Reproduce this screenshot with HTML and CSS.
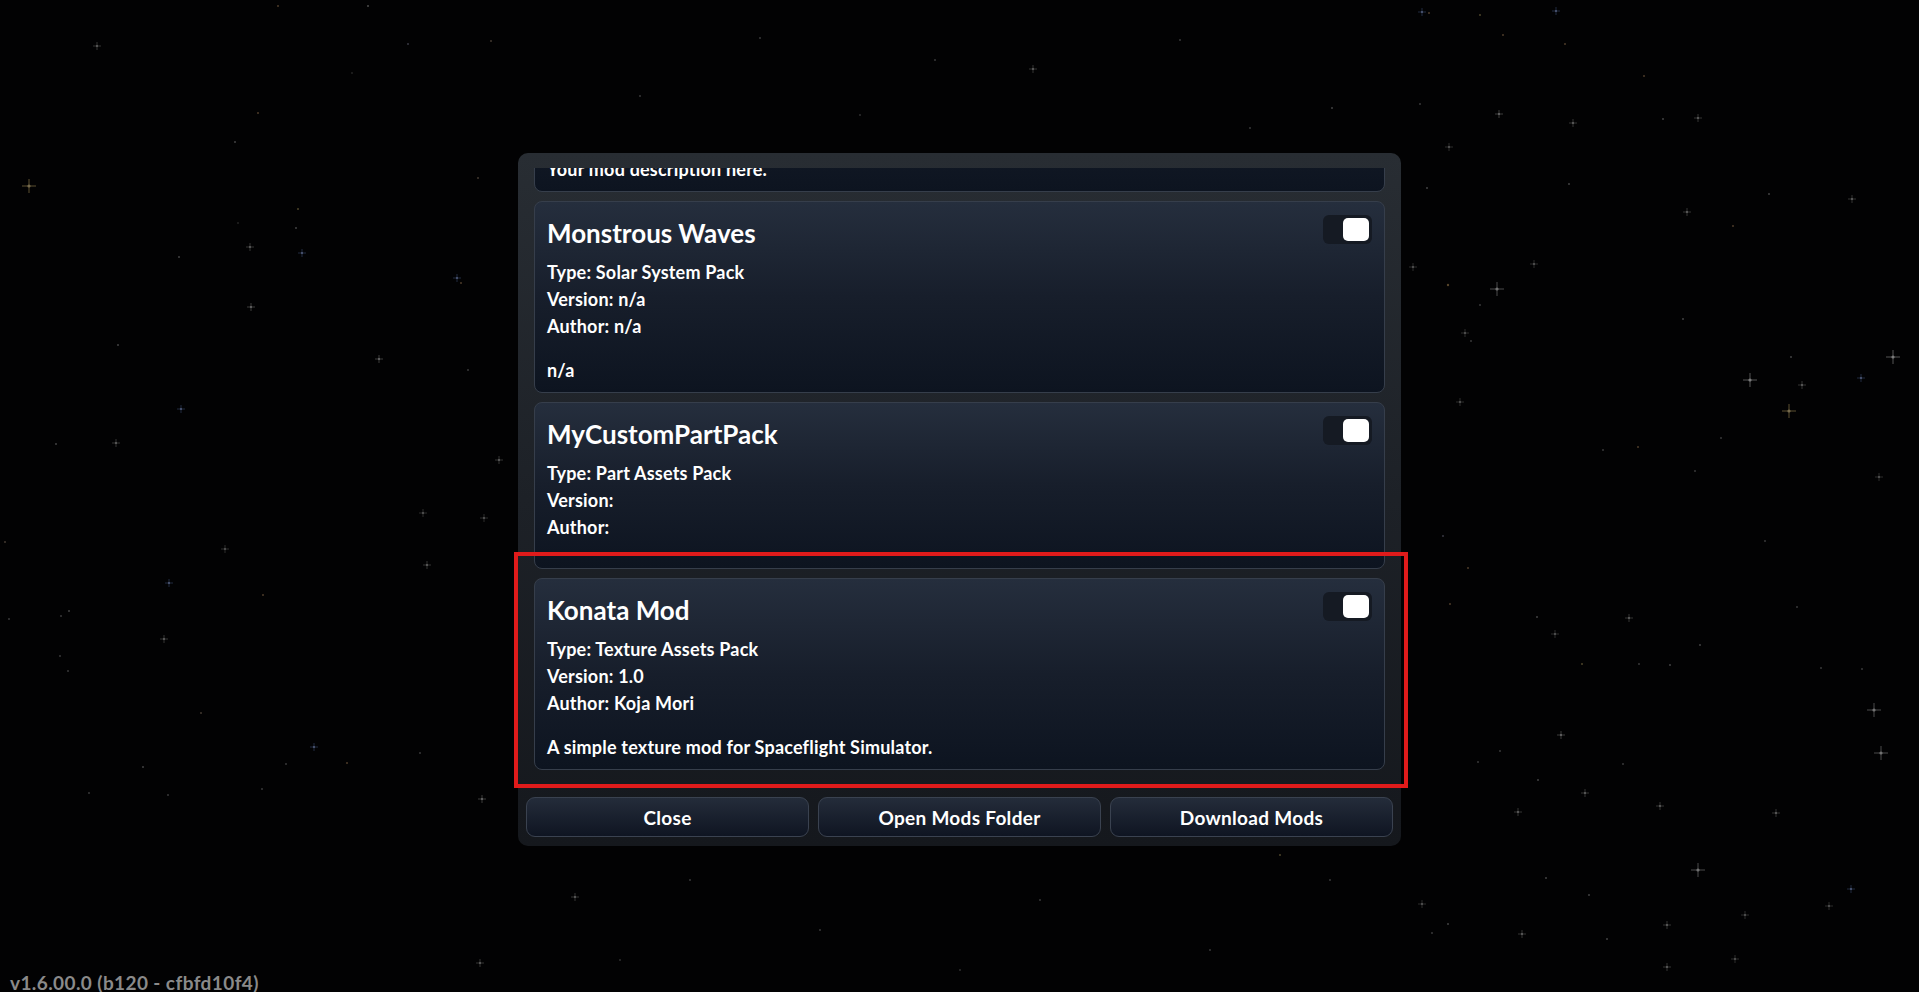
FILE: index.html
```html
<!DOCTYPE html>
<html lang="en">
<head>
    <meta charset="UTF-8">
    <meta name="viewport" content="width=device-width, initial-scale=1.0">
    <title>Mods</title>
    <link rel="stylesheet" href="styles.css">
</head>
<body>

    <!-- Star field -->
    <svg class="stars" width="1919" height="992" viewBox="0 0 1919 992">
        <defs>
            <g id="spark"><path d="M-4 0H4M0 -4V4" stroke-width="0.8"/><circle r="1.1" stroke="none"/></g>
            <g id="spark-big"><path d="M-7 0H7M0 -7V7" stroke-width="1"/><circle r="1.6" stroke="none"/></g>
        </defs>
        <g class="sparks">
            <use href="#spark-big" x="29" y="186" stroke="#a8925a" fill="#d8c28a"/>
            <use href="#spark" x="97" y="46" stroke="#777" fill="#aaa"/>
            <use href="#spark" x="250" y="247" stroke="#777" fill="#aaa"/>
            <use href="#spark" x="302" y="253" stroke="#4d5f8f" fill="#8ea2d8"/>
            <use href="#spark" x="457" y="278" stroke="#4d5f8f" fill="#8ea2d8"/>
            <use href="#spark" x="251" y="307" stroke="#888" fill="#bbb"/>
            <use href="#spark" x="379" y="359" stroke="#888" fill="#bbb"/>
            <use href="#spark" x="116" y="443" stroke="#777" fill="#aaa"/>
            <use href="#spark" x="499" y="460" stroke="#777" fill="#aaa"/>
            <use href="#spark" x="427" y="565" stroke="#777" fill="#aaa"/>
            <use href="#spark" x="164" y="639" stroke="#777" fill="#aaa"/>
            <use href="#spark" x="482" y="799" stroke="#888" fill="#bbb"/>
            <use href="#spark" x="225" y="549" stroke="#666" fill="#999"/>
            <use href="#spark" x="484" y="518" stroke="#666" fill="#999"/>
            <use href="#spark" x="423" y="513" stroke="#666" fill="#999"/>
            <use href="#spark" x="181" y="409" stroke="#4d5f8f" fill="#8ea2d8"/>
            <use href="#spark" x="169" y="583" stroke="#4d5f8f" fill="#8ea2d8"/>
            <use href="#spark" x="314" y="747" stroke="#4d5f8f" fill="#8ea2d8"/>
            <use href="#spark" x="1033" y="69" stroke="#777" fill="#aaa"/>
            <use href="#spark" x="575" y="897" stroke="#777" fill="#aaa"/>
            <use href="#spark" x="480" y="963" stroke="#777" fill="#aaa"/>
            <use href="#spark" x="1422" y="12" stroke="#4d5f8f" fill="#8ea2d8"/>
            <use href="#spark" x="1556" y="11" stroke="#4d5f8f" fill="#8ea2d8"/>
            <use href="#spark" x="1499" y="114" stroke="#888" fill="#bbb"/>
            <use href="#spark" x="1698" y="118" stroke="#777" fill="#aaa"/>
            <use href="#spark" x="1852" y="199" stroke="#777" fill="#aaa"/>
            <use href="#spark" x="1687" y="212" stroke="#777" fill="#aaa"/>
            <use href="#spark-big" x="1497" y="289" stroke="#888" fill="#ccc"/>
            <use href="#spark-big" x="1893" y="357" stroke="#999" fill="#ddd"/>
            <use href="#spark-big" x="1750" y="380" stroke="#999" fill="#ddd"/>
            <use href="#spark-big" x="1789" y="411" stroke="#a8925a" fill="#d8c28a"/>
            <use href="#spark" x="1802" y="385" stroke="#777" fill="#aaa"/>
            <use href="#spark" x="1861" y="378" stroke="#4d5f8f" fill="#8ea2d8"/>
            <use href="#spark-big" x="1874" y="710" stroke="#888" fill="#ccc"/>
            <use href="#spark-big" x="1881" y="753" stroke="#888" fill="#ccc"/>
            <use href="#spark-big" x="1698" y="870" stroke="#888" fill="#ccc"/>
            <use href="#spark" x="1561" y="735" stroke="#888" fill="#bbb"/>
            <use href="#spark" x="1585" y="793" stroke="#777" fill="#aaa"/>
            <use href="#spark" x="1660" y="806" stroke="#777" fill="#aaa"/>
            <use href="#spark" x="1776" y="813" stroke="#777" fill="#aaa"/>
            <use href="#spark" x="1518" y="812" stroke="#777" fill="#aaa"/>
            <use href="#spark" x="1629" y="618" stroke="#777" fill="#aaa"/>
            <use href="#spark" x="1555" y="634" stroke="#666" fill="#999"/>
            <use href="#spark" x="1667" y="925" stroke="#777" fill="#aaa"/>
            <use href="#spark" x="1522" y="934" stroke="#777" fill="#aaa"/>
            <use href="#spark" x="1422" y="904" stroke="#666" fill="#999"/>
            <use href="#spark" x="1851" y="889" stroke="#4d5f8f" fill="#8ea2d8"/>
            <use href="#spark" x="1745" y="915" stroke="#666" fill="#999"/>
            <use href="#spark" x="1829" y="906" stroke="#666" fill="#999"/>
            <use href="#spark" x="1667" y="967" stroke="#777" fill="#aaa"/>
            <use href="#spark" x="1735" y="959" stroke="#666" fill="#999"/>
            <use href="#spark" x="1879" y="477" stroke="#666" fill="#999"/>
            <use href="#spark" x="1449" y="147" stroke="#666" fill="#999"/>
            <use href="#spark" x="1573" y="123" stroke="#777" fill="#aaa"/>
            <use href="#spark" x="1413" y="267" stroke="#666" fill="#999"/>
            <use href="#spark" x="1534" y="264" stroke="#666" fill="#999"/>
            <use href="#spark" x="1465" y="333" stroke="#666" fill="#999"/>
            <use href="#spark" x="1460" y="402" stroke="#666" fill="#999"/>
        </g>
        <g class="dots">
            <circle cx="278" cy="6" r="1" fill="#8a6a4a"/>
            <circle cx="368" cy="6" r="1" fill="#888"/>
            <circle cx="235" cy="142" r="1" fill="#777"/>
            <circle cx="258" cy="113" r="1" fill="#8a6a4a"/>
            <circle cx="298" cy="209" r="1" fill="#8a7a4a"/>
            <circle cx="296" cy="228" r="1" fill="#777"/>
            <circle cx="179" cy="257" r="1" fill="#777"/>
            <circle cx="478" cy="178" r="1" fill="#776655"/>
            <circle cx="408" cy="44" r="1" fill="#667"/>
            <circle cx="491" cy="41" r="1" fill="#776655"/>
            <circle cx="352" cy="73" r="0.8" fill="#666"/>
            <circle cx="238" cy="223" r="0.8" fill="#666"/>
            <circle cx="461" cy="283" r="1" fill="#8a6a4a"/>
            <circle cx="118" cy="345" r="1" fill="#777"/>
            <circle cx="56" cy="444" r="1" fill="#777"/>
            <circle cx="468" cy="370" r="1" fill="#666"/>
            <circle cx="263" cy="595" r="1" fill="#8a6a4a"/>
            <circle cx="9" cy="619" r="1" fill="#666"/>
            <circle cx="69" cy="611" r="1" fill="#777"/>
            <circle cx="61" cy="616" r="1" fill="#666"/>
            <circle cx="60" cy="656" r="1" fill="#666"/>
            <circle cx="68" cy="671" r="1" fill="#666"/>
            <circle cx="347" cy="763" r="1" fill="#8a6a4a"/>
            <circle cx="420" cy="753" r="1" fill="#666"/>
            <circle cx="143" cy="767" r="1" fill="#777"/>
            <circle cx="286" cy="764" r="1" fill="#666"/>
            <circle cx="262" cy="789" r="1" fill="#666"/>
            <circle cx="89" cy="793" r="1" fill="#666"/>
            <circle cx="168" cy="795" r="1" fill="#666"/>
            <circle cx="201" cy="713" r="1" fill="#776655"/>
            <circle cx="5" cy="542" r="1" fill="#776655"/>
            <circle cx="1429" cy="13" r="1" fill="#8a6a4a"/>
            <circle cx="1480" cy="15" r="1" fill="#8a7a4a"/>
            <circle cx="1503" cy="35" r="1" fill="#8a6a4a"/>
            <circle cx="1565" cy="44" r="1" fill="#8a6a4a"/>
            <circle cx="1644" cy="76" r="1" fill="#8a6a4a"/>
            <circle cx="1663" cy="119" r="1" fill="#777"/>
            <circle cx="1769" cy="194" r="1" fill="#777"/>
            <circle cx="1733" cy="226" r="1" fill="#8a6a4a"/>
            <circle cx="1448" cy="285" r="1.2" fill="#9a7a4a"/>
            <circle cx="1427" cy="188" r="1" fill="#777"/>
            <circle cx="1569" cy="184" r="1" fill="#777"/>
            <circle cx="1471" cy="341" r="1" fill="#666"/>
            <circle cx="1480" cy="305" r="1" fill="#666"/>
            <circle cx="1791" cy="357" r="1" fill="#777"/>
            <circle cx="1683" cy="319" r="1" fill="#777"/>
            <circle cx="1721" cy="438" r="1" fill="#666"/>
            <circle cx="1638" cy="447" r="1" fill="#8a6a4a"/>
            <circle cx="1603" cy="450" r="1" fill="#666"/>
            <circle cx="1695" cy="471" r="1" fill="#666"/>
            <circle cx="1450" cy="604" r="1" fill="#8a6a4a"/>
            <circle cx="1468" cy="568" r="1" fill="#8a6a4a"/>
            <circle cx="1537" cy="617" r="1" fill="#777"/>
            <circle cx="1700" cy="645" r="1" fill="#777"/>
            <circle cx="1670" cy="665" r="1" fill="#777"/>
            <circle cx="1639" cy="664" r="1" fill="#666"/>
            <circle cx="1582" cy="664" r="1" fill="#8a7a4a"/>
            <circle cx="1797" cy="607" r="1" fill="#666"/>
            <circle cx="1765" cy="541" r="1" fill="#666"/>
            <circle cx="1821" cy="668" r="1" fill="#666"/>
            <circle cx="1862" cy="669" r="1" fill="#666"/>
            <circle cx="1432" cy="933" r="1" fill="#666"/>
            <circle cx="1448" cy="924" r="1" fill="#777"/>
            <circle cx="1607" cy="939" r="1" fill="#777"/>
            <circle cx="1546" cy="878" r="1" fill="#777"/>
            <circle cx="1589" cy="895" r="1" fill="#777"/>
            <circle cx="1443" cy="536" r="1" fill="#667"/>
            <circle cx="1538" cy="780" r="1" fill="#777"/>
            <circle cx="1623" cy="764" r="1" fill="#666"/>
            <circle cx="1478" cy="762" r="1" fill="#666"/>
            <circle cx="1500" cy="751" r="1" fill="#666"/>
            <circle cx="1332" cy="108" r="1" fill="#777"/>
            <circle cx="1420" cy="104" r="1" fill="#666"/>
            <circle cx="935" cy="60" r="1" fill="#666"/>
            <circle cx="760" cy="38" r="1" fill="#666"/>
            <circle cx="640" cy="96" r="1" fill="#666"/>
            <circle cx="1180" cy="40" r="1" fill="#666"/>
            <circle cx="1250" cy="128" r="1" fill="#666"/>
            <circle cx="860" cy="115" r="1" fill="#555"/>
            <circle cx="690" cy="880" r="1" fill="#666"/>
            <circle cx="820" cy="930" r="1" fill="#666"/>
            <circle cx="1040" cy="900" r="1" fill="#666"/>
            <circle cx="1210" cy="950" r="1" fill="#666"/>
            <circle cx="1330" cy="880" r="1" fill="#666"/>
            <circle cx="1280" cy="855" r="1" fill="#8a7a4a"/>
            <circle cx="960" cy="970" r="1" fill="#555"/>
            <circle cx="620" cy="960" r="1" fill="#555"/>
        </g>
    </svg>

    <div class="mods-panel">
        <div class="mod-list">
            <div class="mod-card">
                <div class="mod-head">
                    <h2 class="mod-title">Example Mod</h2>
                    <span class="toggle"><span class="knob"></span></span>
                </div>
                <div class="mod-info">
                    <div>Type: Texture Assets Pack</div>
                    <div>Version: 1.0</div>
                    <div>Author: Your Name</div>
                </div>
                <p class="mod-desc">Your mod description here.</p>
            </div>
            <div class="mod-card">
                <div class="mod-head">
                    <h2 class="mod-title">Monstrous Waves</h2>
                    <span class="toggle"><span class="knob"></span></span>
                </div>
                <div class="mod-info">
                    <div>Type: Solar System Pack</div>
                    <div>Version: n/a</div>
                    <div>Author: n/a</div>
                </div>
                <p class="mod-desc">n/a</p>
            </div>
            <div class="mod-card">
                <div class="mod-head">
                    <h2 class="mod-title">MyCustomPartPack</h2>
                    <span class="toggle"><span class="knob"></span></span>
                </div>
                <div class="mod-info">
                    <div>Type: Part Assets Pack</div>
                    <div>Version:</div>
                    <div>Author:</div>
                </div>
                <p class="mod-desc"></p>
            </div>
            <div class="mod-card">
                <div class="mod-head">
                    <h2 class="mod-title">Konata Mod</h2>
                    <span class="toggle"><span class="knob"></span></span>
                </div>
                <div class="mod-info">
                    <div>Type: Texture Assets Pack</div>
                    <div>Version: 1.0</div>
                    <div>Author: Koja Mori</div>
                </div>
                <p class="mod-desc">A simple texture mod for Spaceflight Simulator.</p>
            </div>
        </div>

        <div class="panel-buttons">
            <a href="#" class="btn">Close</a>
            <a href="#" class="btn">Open Mods Folder</a>
            <a href="#" class="btn">Download Mods</a>
        </div>

        <!-- highlight frame -->
        <div class="highlight"></div>
    </div>

    <div class="version">v1.6.00.0 (b120 - cfbfd10f4)</div>

</body>
</html>
```

FILE: styles.css
```css
/* Reset */
* {
    margin: 0;
    padding: 0;
    box-sizing: border-box;
}

body {
    font-family: "Lato", "Liberation Sans", sans-serif;
    background-color: #020203;
    color: white;
    height: 100vh;
    overflow: hidden;
    position: relative;
}

/* Star field behind everything */
.stars {
    position: absolute;
    top: 0;
    left: 0;
    opacity: 0.55;
}

/* Main mods window */
.mods-panel {
    position: relative;
    width: 883px;
    height: 693px;
    margin: 153px auto 0;
    padding: 15px 8px 9px;
    border-radius: 10px;
    background: linear-gradient(180deg, #282d33 0%, #1d2127 50%, #15181d 100%);
    display: flex;
    flex-direction: column;
}

/* Scrolled list of mods (pinned to bottom) */
.mod-list {
    height: 620px;
    overflow: hidden;
    display: flex;
    flex-direction: column;
    justify-content: flex-end;
    gap: 9px;
    padding: 0 8px 18px;
}

.mod-card {
    flex-shrink: 0;
    padding: 15px 12px 8px;
    border: 1px solid #363e4b;
    border-radius: 8px;
    background: linear-gradient(180deg, #252e3d 0%, #171e2b 50%, #0d1420 100%);
}

.mod-head {
    display: flex;
    justify-content: space-between;
    align-items: flex-start;
}

.mod-title {
    font-size: 26px;
    line-height: 32px;
    font-weight: 700;
}

.toggle {
    display: flex;
    justify-content: flex-end;
    width: 49px;
    height: 29px;
    margin-top: -2px;
    padding: 3px;
    border-radius: 6px;
    background-color: #151a23;
}

.knob {
    width: 26px;
    height: 23px;
    border-radius: 5px;
    background-color: #ffffff;
}

.mod-info {
    margin-top: 10px;
    font-size: 18px;
    line-height: 27px;
    font-weight: 700;
    letter-spacing: 0.2px;
}

.mod-desc {
    margin-top: 17px;
    min-height: 2px;
    font-size: 18px;
    line-height: 27px;
    font-weight: 700;
    letter-spacing: 0.2px;
}

/* Bottom buttons */
.panel-buttons {
    display: flex;
    gap: 9px;
    margin-top: 9px;
}

.btn {
    flex: 1;
    height: 40px;
    display: flex;
    align-items: center;
    justify-content: center;
    color: white;
    font-size: 19px;
    font-weight: 700;
    letter-spacing: 0.3px;
    text-decoration: none;
    border: 1px solid #3a4250;
    border-radius: 9px;
    background: linear-gradient(180deg, #242c3a 0%, #0f1522 100%);
}

/* Red annotation frame around the last mod */
.highlight {
    position: absolute;
    left: -4px;
    top: 399px;
    width: 894px;
    height: 236px;
    border: 4px solid #e01b1b;
    pointer-events: none;
}

.version {
    position: absolute;
    left: 10px;
    bottom: -2px;
    font-size: 19px;
    font-weight: 700;
    letter-spacing: 0.4px;
    color: #8a8a8a;
}
```
